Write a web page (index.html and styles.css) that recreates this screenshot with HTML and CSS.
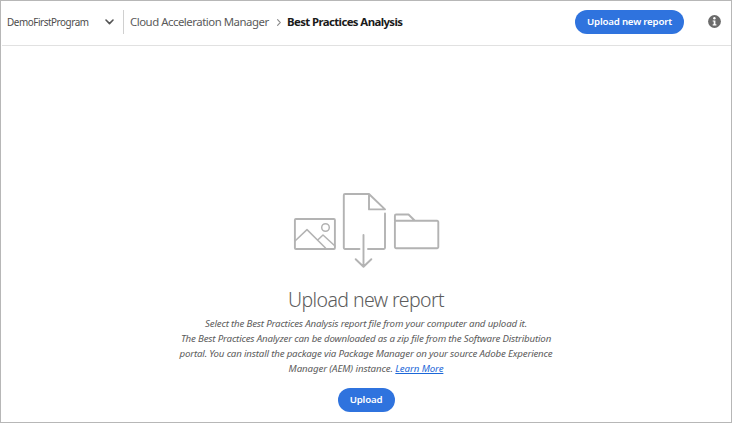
FILE: index.html
```html
<!DOCTYPE html>
<html lang="en">
<head>
<meta charset="utf-8">
<title>Best Practices Analysis</title>
<link rel="stylesheet" href="styles.css">
</head>
<body>
<div class="app">
  <header class="topbar">
    <button class="program"><span>DemoFirstProgram</span>
      <svg width="9" height="6" viewBox="0 0 9 6"><path d="M1 1l3.5 3.6L8 1" fill="none" stroke="#555" stroke-width="1.6" stroke-linecap="round" stroke-linejoin="round"/></svg>
    </button>
    <nav class="crumbs">
      <span class="parent">Cloud Acceleration Manager</span>
      <svg width="4" height="7" viewBox="0 0 4 7"><path d="M.6.7L3.3 3.5.6 6.3" fill="none" stroke="#888" stroke-width="1.1" stroke-linecap="round"/></svg>
      <span class="current">Best Practices Analysis</span>
    </nav>
    <button class="cta new-report">Upload new report</button>
    <svg class="info" width="13" height="13" viewBox="0 0 13 13"><circle cx="6.5" cy="6.5" r="6.4" fill="#6b6b6b"/><circle cx="6.4" cy="3.3" r="1.2" fill="#fff"/><path d="M4.7 5.4h2.7v3.8h1v1.2H4.7V9.2h1V6.6h-1z" fill="#fff"/></svg>
  </header>
  <main class="empty">
    <svg class="art" width="148" height="78" viewBox="0 0 148 78" fill="none" stroke="#b3b3b3" stroke-width="1.9" stroke-linecap="round" stroke-linejoin="round">
      <rect x="2.9" y="27" width="40" height="30" rx="1"/>
      <circle cx="33.5" cy="35.5" r="3.8" stroke-width="1.5"/>
      <path d="M3 49l12-11.4L33.5 56M26 47.8l5-4.8L43 54" stroke-width="1.5"/>
      <path d="M67.5 57H53a1.2 1.2 0 0 1-1.2-1.2V3.2A1.2 1.2 0 0 1 53 2h24l16 15.4H77V2M93 21.4v34.4a1.2 1.2 0 0 1-1.2 1.2H76M71.5 43v31.5M63.7 67.2l7.8 7.6 7.8-7.6"/>
      <path d="M102.9 28.7V23.7a1.2 1.2 0 0 1 1.2-1.2h12.4l6.4 6.2M104.1 28.7h41a1.2 1.2 0 0 1 1.2 1.2v25.2a1.2 1.2 0 0 1-1.2 1.2h-41a1.2 1.2 0 0 1-1.2-1.2V29.9a1.2 1.2 0 0 1 1.2-1.2z"/>
    </svg>
    <h1>Upload new report</h1>
    <p class="hint">
      <span class="l1">Select the Best Practices Analysis report file from your computer and upload it.</span>
      <span class="l2">The Best Practices Analyzer can be downloaded as a zip file from the Software Distribution</span>
      <span class="l3">portal. You can install the package via Package Manager on your source Adobe Experience</span>
      <span class="l4">Manager (AEM) instance. <a href="#">Learn More</a></span>
    </p>
    <button class="cta upload">Upload</button>
  </main>
</div>
</body>
</html>
```
FILE: styles.css
```css
* { box-sizing: border-box; }
body { margin: 0; background: #fff; font-family: "Noto Sans", "Open Sans", sans-serif; }
button { border: 0; padding: 0; background: none; font: inherit; }
.app { height: 423px; border: 1px solid #b7b7b7; overflow: hidden; display: flex; flex-direction: column; }
.topbar { flex: none; height: 45px; margin-left: 1px; padding: 0 10px 3px 5px; border-bottom: 1px solid #e1e1e1; display: flex; align-items: center; white-space: nowrap; }
.program { width: 117px; height: 24px; padding-right: 9px; border-right: 1px solid #d0d0d0; display: flex; align-items: center; justify-content: space-between; font-size: 9.9px; letter-spacing: -0.44px; color: #4b4b4b; }
.crumbs { flex: 1; padding-left: 6px; display: flex; align-items: center; font-size: 11.4px; }
.crumbs svg { margin: 1px 6.5px 0 7.5px; }
.parent { width: 139px; letter-spacing: -0.48px; color: #5a5a5a; }
.current { font-weight: 700; letter-spacing: -0.6px; color: #1a1a1a; }
.cta { height: 24px; border-radius: 12px; background: #2f73de; color: #fff; font-weight: 600; font-size: 9.7px; letter-spacing: -0.2px; line-height: 22px; white-space: nowrap; }
.new-report { width: 109px; }
.info { margin-left: 24px; }
.empty { flex: 1; padding-top: 146px; display: flex; flex-direction: column; align-items: center; }
.art { flex: none; }
h1 { margin: 16px 0 0; font-size: 19.5px; line-height: 28px; font-weight: 300; letter-spacing: -0.58px; color: #5c5c5c; }
.hint { margin: 2px 0 0; font-size: 9.7px; line-height: 15px; letter-spacing: -0.17px; font-style: italic; text-align: center; color: #5c5c5c; white-space: nowrap; }
.hint span { display: block; }
.l4 { letter-spacing: -0.1px; }
.hint a { color: #1b67d8; }
.upload { width: 57px; margin-top: 12px; }
```
